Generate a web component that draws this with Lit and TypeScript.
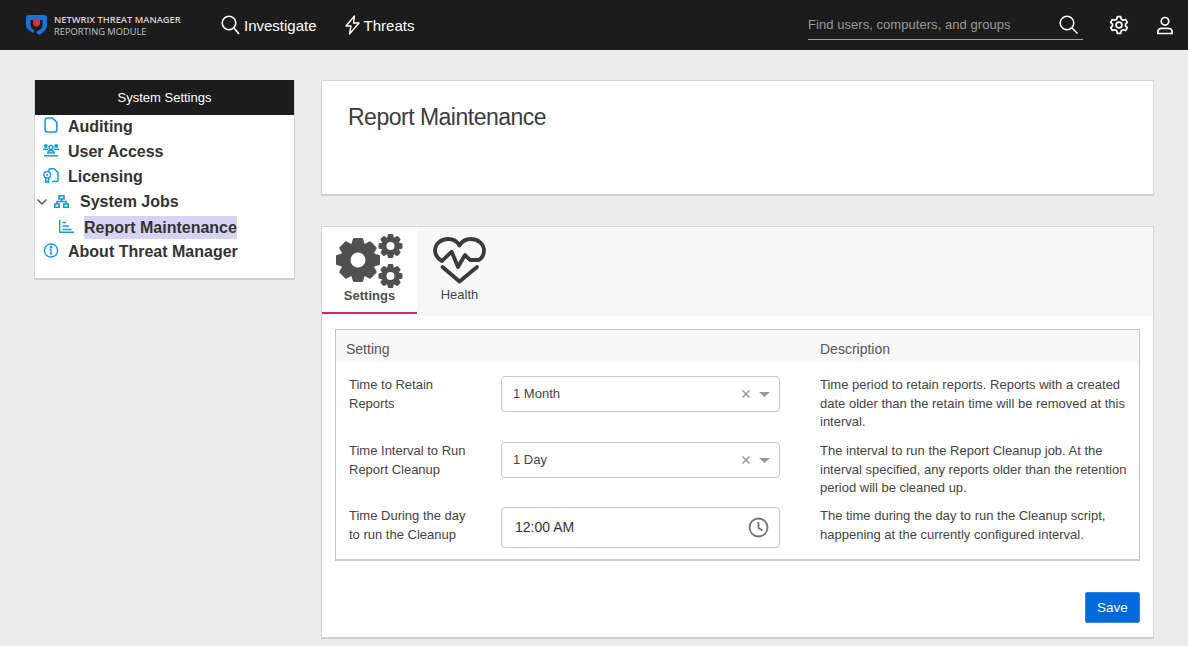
import { LitElement, html, css, svg } from "lit";
import { customElement } from "lit/decorators.js";

const gear = (cx: number, cy: number, outer: number, body: number, hole: number) => {
  const w = outer * 0.46;
  const base = body - 2;
  const teeth = [];
  for (let i = 0; i < 8; i++) {
    teeth.push(svg`<path d=${`M${cx - w * 0.66} ${cy - base}L${cx - w / 2} ${cy - outer + 1}Q${cx - w / 2} ${cy - outer} ${cx - w / 2 + 1} ${cy - outer}H${cx + w / 2 - 1}Q${cx + w / 2} ${cy - outer} ${cx + w / 2} ${cy - outer + 1}L${cx + w * 0.66} ${cy - base}z`} transform=${`rotate(${i * 45} ${cx} ${cy})`}/>`);
  }
  return svg`<g><mask id=${`m${cx}${cy}`}><rect width="67" height="54" fill="#fff"/><circle cx=${cx} cy=${cy} r=${hole} fill="#000"/></mask><g fill="#505050" mask=${`url(#m${cx}${cy})`}>${teeth}<circle cx=${cx} cy=${cy} r=${body}/></g></g>`;
};

const clearIcon = html`<svg class="x" width="8" height="8" viewBox="0 0 8 8" stroke="#999" stroke-width="1.500"><path d="M.5.500l7 7M7.500.500l-7 7"/></svg>`;
const caret = html`<svg width="11" height="5" viewBox="0 0 11 5" fill="#999"><path d="M0 0h11L5.500 5z"/></svg>`;

@customElement("app-root")
export class AppRoot extends LitElement {
  static styles = css`
    :host { display: block; width: 1188px; height: 646px; overflow: hidden; background: #ececec; font-family: "Liberation Sans", Arial, sans-serif; color: #333; }
    svg { display: block; flex: none; }
    .top { height: 50px; background: #1c1c1c; display: flex; align-items: center; color: #fff; }
    .brand { display: flex; align-items: center; gap: 7px; margin-left: 26px; width: 195px; }
    .brand-text { font-family: "Open Sans", sans-serif; font-size: 9.3px; line-height: 12px; color: #c4c4c4; white-space: nowrap; padding-top: 1px; }
    .brand-text b { display: block; font-weight: 600; color: #d4d4d4; }
    .nav { display: flex; align-items: center; gap: 4px; font-size: 15px; margin-right: 28px; }
    .nav span { padding-top: 1px; }
    .search { margin-left: auto; width: 275px; height: 30px; margin-bottom: 1px; border-bottom: 1px solid #a0a0a0; display: flex; align-items: center; justify-content: space-between; font-size: 13px; letter-spacing: 0.05px; color: #9a9a9a; }
    .search svg { margin-right: 5px; }
    .ico-gear { margin-left: 26px; }
    .ico-user { margin-left: 28px; margin-right: 15px; }
    .main { display: flex; align-items: flex-start; padding: 30px 34px 0; gap: 26px; }
    .side { width: 261px; height: 200px; flex: none; background: #fff; border: 1px solid #d4d4d4; border-top: 0; border-bottom: 2px solid #cfcfcf; box-sizing: border-box; }
    .side-h { height: 35px; background: #1c1c1c; color: #fff; font-size: 13px; display: flex; align-items: center; justify-content: center; }
    .tree { margin-top: -1px; font-size: 16px; font-weight: 700; color: #333; }
    .row { height: 25px; display: flex; align-items: center; white-space: nowrap; }
    .i { width: 33px; display: flex; padding-left: 8px; box-sizing: border-box; }
    .i svg { margin-top: -3px; }
    .i.doc { padding-left: 9px; }
    .i.doc svg { margin-top: -4px; }
    .chev { margin: 0 7px 0 2px; }
    .jobs-label { margin-left: 11px; }
    .rep-i { margin: 0 10px 0 24px; }
    .sel { background: #d5d4f4; height: 23px; line-height: 24px; margin-top: 1px; }
    .content { flex: 1; min-width: 0; display: flex; flex-direction: column; gap: 30px; }
    .card { background: #fff; border: 1px solid #d4d4d4; border-bottom: 2px solid #cfcfcf; box-sizing: border-box; }
    .title { height: 116px; padding: 20px 26px; font-size: 23px; letter-spacing: -0.5px; color: #3c3c3c; line-height: 32px; }
    .panel { height: 413px; }
    .tabs { height: 89px; background: #f8f8f8; display: flex; align-items: flex-start; }
    .tab { width: 95px; box-sizing: border-box; display: flex; flex-direction: column; align-items: center; font-size: 13px; color: #444; }
    .tab.on { height: 87px; background: #fff; border-bottom: 2px solid #d6246e; font-weight: 700; color: #505050; }
    .tab.on svg { margin-top: 7px; margin-bottom: 1px; }
    .tab.h { width: 85px; }
    .tab.h svg { margin-top: 10px; margin-bottom: 3px; }
    .tab span { line-height: 14px; }
    .body { padding: 13px 13px 0; }
    .grid { border: 1px solid #c4c4c4; border-bottom: 2px solid #c9c9c9; height: 232px; box-sizing: border-box; font-size: 13px; color: #444; line-height: 18.6px; }
    .gh { height: 33px; padding-top: 6px; box-sizing: border-box; background: #f8f8f8; display: flex; align-items: center; font-size: 14px; color: #555; }
    .gh div:first-child { width: 484px; padding-left: 10px; box-sizing: border-box; }
    .tr { display: flex; align-items: flex-start; padding-top: 13px; box-sizing: border-box; }
    .lab { width: 165px; padding-left: 13px; box-sizing: border-box; flex: none; }
    .ctl { width: 279px; flex: none; }
    .desc { margin-left: 40px; width: 312px; flex: none; }
    .tr1 { height: 66px; } .tr2 { height: 65px; } .tr3 { height: 66px; }
    .field { height: 36px; border: 1px solid #c8c8c8; border-radius: 4px; box-sizing: border-box; display: flex; align-items: center; padding: 0 9px 0 11px; color: #444; background: #fff; }
    .field .v { flex: 1; }
    .x { margin-right: 9px; }
    .time { height: 41px; font-size: 14px; padding-left: 13px; padding-right: 10px; color: #333; }
    .foot { display: flex; justify-content: flex-end; padding-top: 31px; }
    button { width: 55px; height: 31px; background: #0069d9; color: #fff; border: 1px solid #2f86e0; border-radius: 2px; font: 13.5px "Liberation Sans", Arial, sans-serif; padding: 0; }
  `;

  render() {
    return html`
      <div class="top">
        <div class="brand">
          <svg width="21" height="20" viewBox="0 0 21 20"><path d="M3 0h15a3 3 0 0 1 3 3v7c0 4-3 7.500-8 10l-3-3 4-2.500c1.500-1 2.500-2.500 2.500-4.500V5H4.500v5c0 2 1 3.500 2.500 4.500l1.500 1-1 2.500C3 16 0 13.500 0 10V3a3 3 0 0 1 3-3z" fill="#1773d9"/><path d="M7 5h7v3.500c0 1.500-1.500 2.700-3.500 3.500C8.500 11.200 7 10 7 8.500z" fill="#d92f3f"/></svg>
          <div class="brand-text"><b>NETWRIX THREAT MANAGER</b>REPORTING MODULE</div>
        </div>
        <div class="nav">
          <svg width="19" height="20" viewBox="0 0 19 20" fill="none" stroke="#fff" stroke-width="1.600"><circle cx="8" cy="8" r="6.800"/><path d="M13 13l5 6"/></svg>
          <span>Investigate</span>
        </div>
        <div class="nav">
          <svg width="15" height="20" viewBox="0 0 15 20" fill="none" stroke="#fff" stroke-width="1.400" stroke-linejoin="round"><path d="M9.500 1 1 11h5l-1.500 8L14 8H8.500z"/></svg>
          <span>Threats</span>
        </div>
        <div class="search">
          <span>Find users, computers, and groups</span>
          <svg width="19" height="19" viewBox="0 0 19 19" fill="none" stroke="#fff" stroke-width="1.500"><circle cx="8" cy="8" r="6.800"/><path d="M13 13l5.500 5.500"/></svg>
        </div>
        <svg class="ico-gear" width="20" height="20" viewBox="0 0 24 24" fill="none" stroke="#fff" stroke-width="2" stroke-linejoin="round"><circle cx="12" cy="12" r="3.500"/><path d="M10 2h4l.7 3 2.300 1.300 3-.9 2 3.400-2.200 2.100v2.200l2.200 2.100-2 3.400-3-.9L14.700 19 14 22h-4l-.7-3-2.300-1.300-3 .9-2-3.400 2.200-2.100v-2.200L2 8.800l2-3.400 3 .9L9.300 5z"/></svg>
        <svg class="ico-user" width="16" height="19" viewBox="0 0 17 19" fill="none" stroke="#fff" stroke-width="1.800"><circle cx="8.500" cy="5" r="4"/><path d="M1 18v-2c0-2 2-3.500 4-3.500h7c2 0 4 1.500 4 3.500v2z"/></svg>
      </div>
      <div class="main">
        <div class="side">
          <div class="side-h">System Settings</div>
          <div class="tree">
            <div class="row"><span class="i doc"><svg width="14" height="16" viewBox="0 0 13 15" fill="none" stroke="#1a9cd8" stroke-width="1.500" stroke-linejoin="round"><path d="M3 1h5l4 4v7a2 2 0 0 1-2 2H3a2 2 0 0 1-2-2V3a2 2 0 0 1 2-2z"/></svg></span>Auditing</div>
            <div class="row"><span class="i"><svg width="16" height="13" viewBox="0 0 16 13" fill="none" stroke="#1a9cd8" stroke-width="1.500"><g fill="#1a9cd8" stroke="none"><circle cx="2.800" cy="2" r="2"/><circle cx="13.200" cy="2" r="2"/><path d="M0 4.500h5v1.500H0zM11 4.500h5v1.500h-5z"/></g><circle cx="8" cy="3.600" r="2"/><path d="M4.800 9c0-1.500 1.500-2.600 3.200-2.600S11.200 7.500 11.200 9z"/><path d="M1 11.800h14"/></svg></span>User Access</div>
            <div class="row"><span class="i"><svg width="16" height="15" viewBox="0 0 16 15" fill="none" stroke="#1a9cd8" stroke-width="1.500"><path d="M6 3V2a1.200 1.200 0 0 1 1.200-1.200h4L15 4.500v7.700a1.200 1.200 0 0 1-1.200 1.200H9"/><circle cx="4.200" cy="6.800" r="3.300"/><circle cx="4.200" cy="6.800" r="1.100" fill="#1a9cd8" stroke="none"/><path d="M2.800 10v4.400l1.400-1 1.400 1V10"/></svg></span>Licensing</div>
            <div class="row">
              <svg class="chev" width="10" height="6" viewBox="0 0 10 6" fill="none" stroke="#555" stroke-width="1.400"><path d="M.5.500 5 5 9.500.500"/></svg>
              <svg width="15" height="13" viewBox="0 0 15 13" fill="none" stroke="#1a9cd8" stroke-width="1.600"><rect x="5" y=".8" width="5" height="3.200"/><rect x=".8" y="9" width="4.400" height="3.200"/><rect x="9.800" y="9" width="4.400" height="3.200"/><path d="M7.500 4v2.500M3 9V6.500h9V9"/></svg>
              <span class="jobs-label">System Jobs</span>
            </div>
            <div class="row">
              <svg class="rep-i" width="15" height="13" viewBox="0 0 15 13" fill="none" stroke="#1a9cd8" stroke-width="1.400"><path d="M.7 0v12.300H15M3.500 2.500h3.500M3.500 6h6.500M3.500 9.500h9"/></svg>
              <span class="sel">Report Maintenance</span>
            </div>
            <div class="row"><span class="i"><svg width="16" height="15" viewBox="0 0 16 16" fill="none" stroke="#1a9cd8" stroke-width="1.500"><circle cx="8" cy="8" r="7"/><path d="M8 7v4.500M6.500 11.500h3M6.500 7H8" /><circle cx="8" cy="4.500" r=".8" fill="#1a9cd8"/></svg></span>About Threat Manager</div>
          </div>
        </div>
        <div class="content">
          <div class="card title">Report Maintenance</div>
          <div class="card panel">
            <div class="tabs">
              <div class="tab on">
                <svg width="67" height="54" viewBox="0 0 67 54">${gear(22, 26, 22, 17.500, 7.500)}${gear(54.500, 12, 12, 9, 4)}${gear(54.500, 42, 12, 9, 4)}</svg>
                <span>Settings</span>
              </div>
              <div class="tab h">
                <svg width="53" height="48" viewBox="0 0 53 48" fill="none" stroke="#3a3a3a" stroke-width="3.800" stroke-linejoin="round" stroke-linecap="round"><path d="M9 24C4 21 2 18 2 13.500 2 7 8 2 15 2c5 0 9 2 11.500 6.500C29 4 33 2 38 2c7 0 13 5 13 11.500 0 4.500-2 7.500-5 9.500h-9l-5-5-7 12-6.300-15.300z"/><path d="M9.500 30 26.500 44.500 44 30"/></svg>
                <span>Health</span>
              </div>
            </div>
            <div class="body">
              <div class="grid">
                <div class="gh"><div>Setting</div><div>Description</div></div>
                <div class="tr tr1">
                  <div class="lab">Time to Retain<br />Reports</div>
                  <div class="ctl"><div class="field"><span class="v">1 Month</span>${clearIcon}${caret}</div></div>
                  <div class="desc">Time period to retain reports. Reports with a created date older than the retain time will be removed at this interval.</div>
                </div>
                <div class="tr tr2">
                  <div class="lab">Time Interval to Run<br />Report Cleanup</div>
                  <div class="ctl"><div class="field"><span class="v">1 Day</span>${clearIcon}${caret}</div></div>
                  <div class="desc">The interval to run the Report Cleanup job. At the interval specified, any reports older than the retention period will be cleaned up.</div>
                </div>
                <div class="tr tr3">
                  <div class="lab">Time During the day<br />to run the Cleanup</div>
                  <div class="ctl"><div class="field time"><span class="v">12:00 AM</span><svg width="21" height="21" viewBox="0 0 21 21" fill="none" stroke="#757575" stroke-width="1.800"><circle cx="10.500" cy="10.500" r="9"/><path d="M10.500 5v6l4 2.500"/></svg></div></div>
                  <div class="desc">The time during the day to run the Cleanup script, happening at the currently configured interval.</div>
                </div>
              </div>
              <div class="foot"><button>Save</button></div>
            </div>
          </div>
        </div>
      </div>
    `;
  }
}
